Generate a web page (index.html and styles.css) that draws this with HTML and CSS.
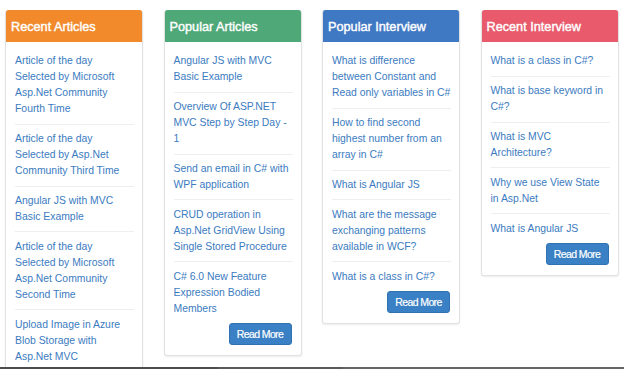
FILE: index.html
```html
<!DOCTYPE html>
<html lang="en">

<head>
    <meta charset="UTF-8">
    <meta name="viewport" content="width=device-width, initial-scale=1.0">
    <title>Articles and Interview Questions</title>
    <link rel="stylesheet" href="styles.css">
</head>

<body>
    <div class="page">
        <div class="board">
            <!-- Recent Articles -->
            <section class="panel panel-orange">
                <h3 class="panel-title">Recent Articles</h3>
                <ul class="link-list link-list-long">
                    <li><a href="#">Article of the day Selected by Microsoft Asp.Net Community Fourth Time</a></li>
                    <li><a href="#">Article of the day Selected by Asp.Net Community Third Time</a></li>
                    <li><a href="#">Angular JS with MVC Basic Example</a></li>
                    <li><a href="#">Article of the day Selected by Microsoft Asp.Net Community Second Time</a></li>
                    <li><a href="#">Upload Image in Azure Blob Storage with Asp.Net MVC</a></li>
                </ul>
            </section>

            <!-- Popular Articles -->
            <section class="panel panel-green">
                <h3 class="panel-title">Popular Articles</h3>
                <ul class="link-list">
                    <li><a href="#">Angular JS with MVC Basic Example</a></li>
                    <li><a href="#">Overview Of ASP.NET MVC Step by Step Day - 1</a></li>
                    <li><a href="#">Send an email in C# with WPF application</a></li>
                    <li><a href="#">CRUD operation in Asp.Net GridView Using Single Stored Procedure</a></li>
                    <li><a href="#">C# 6.0 New Feature Expression Bodied Members</a></li>
                </ul>
                <button class="read-more">Read More</button>
            </section>

            <!-- Popular Interview -->
            <section class="panel panel-blue">
                <h3 class="panel-title">Popular Interview</h3>
                <ul class="link-list">
                    <li><a href="#">What is difference between Constant and Read only variables in C#</a></li>
                    <li><a href="#">How to find second highest number from an array in C#</a></li>
                    <li><a href="#">What is Angular JS</a></li>
                    <li><a href="#">What are the message exchanging patterns available in WCF?</a></li>
                    <li><a href="#">What is a class in C#?</a></li>
                </ul>
                <button class="read-more">Read More</button>
            </section>

            <!-- Recent Interview -->
            <section class="panel panel-red">
                <h3 class="panel-title">Recent Interview</h3>
                <ul class="link-list">
                    <li><a href="#">What is a class in C#?</a></li>
                    <li><a href="#">What is base keyword in C#?</a></li>
                    <li><a href="#">What is MVC Architecture?</a></li>
                    <li><a href="#">Why we use View State in Asp.Net</a></li>
                    <li><a href="#">What is Angular JS</a></li>
                </ul>
                <button class="read-more">Read More</button>
            </section>
        </div>
        <div class="taskbar"></div>
    </div>
</body>

</html>
```

FILE: styles.css
```css
/* Configuração geral */
body {
    margin: 0;
    padding: 0;
    font-family: 'Liberation Sans', Arial, sans-serif;
    background: #fff;
    color: #333;
}

.page {
    height: 100vh;
    display: flex;
    flex-direction: column;
}

.board {
    flex: 1;
    overflow: hidden;
    display: grid;
    grid-template-columns: repeat(4, 138px);
    column-gap: 20.5px;
    align-items: start;
    padding: 10px 5px 0;
}

.taskbar {
    height: 2px;
    background: linear-gradient(90deg, #4d4d4d 0 35%, #5a5a5a 35% 55%, #666 55% 100%);
}

/* Painéis */
.panel {
    background-color: #fff;
    border: 1px solid #e2e2e2;
    border-top: none;
    border-radius: 3px;
    box-shadow: 0 1px 2px rgba(0, 0, 0, 0.08);
    overflow: hidden;
}

.panel-title {
    margin: 0 -1px;
    height: 32px;
    line-height: 34px;
    padding: 0 6px;
    font-size: 12.7px;
    font-weight: normal;
    color: #fff;
    -webkit-text-stroke: 0.4px #fff;
    border-radius: 3px 3px 0 0;
}

.panel-orange .panel-title {
    background-color: #f28a2c;
}

.panel-green .panel-title {
    background-color: #4fa877;
}

.panel-blue .panel-title {
    background-color: #3f78c3;
}

.panel-red .panel-title {
    background-color: #e85a6c;
}

/* Lista de links */
.link-list {
    list-style: none;
    margin: 0;
    padding: 5px 8px 0 9px;
}

.link-list-long {
    padding-bottom: 30px;
}

.link-list li {
    padding: 6.4px 0;
    border-bottom: 1px solid #eee;
    font-size: 10.4px;
    line-height: 16px;
}

.link-list li:last-child {
    border-bottom: none;
}

.link-list a {
    color: #3b7bbf;
    text-decoration: none;
}

/* Botão */
.read-more {
    display: block;
    margin: 0 9px 10px auto;
    width: 63px;
    height: 22px;
    padding: 0;
    font-family: inherit;
    font-size: 10.5px;
    letter-spacing: -0.6px;
    color: #fff;
    -webkit-text-stroke: 0.2px #fff;
    background-color: #3a80c4;
    border: 1px solid #3272b0;
    border-radius: 3px;
    cursor: pointer;
}
```
